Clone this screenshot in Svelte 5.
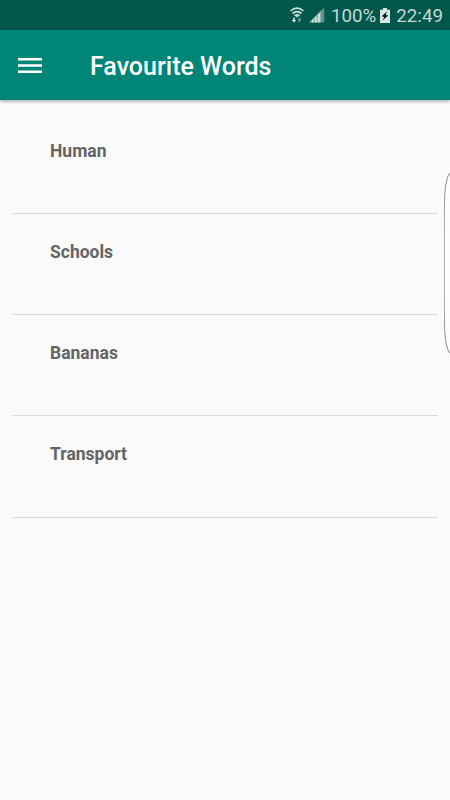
<script>
  const words = ['Human', 'Schools', 'Bananas', 'Transport'];
</script>

<div class="screen">
  <div class="status">
    <svg class="wifi" width="14" height="16" viewBox="0 0 14 16" fill="none" stroke="#cfe1de" stroke-width="1.7">
      <path d="M.7 3.9Q7-1.5 13.3 3.9M2.6 6.5Q7 2.6 11.4 6.5M4.6 8.9Q7 6.9 9.4 8.9" />
      <path d="M5.5 8.8h3L7 10.7z" fill="#cfe1de" stroke="none" />
      <path d="M3.2 10.8h1.7v2.2h1.5L4 15.5 1.7 13h1.5z" fill="#d5e6e3" stroke="none" />
      <path d="M8.6 15.3v-2.2H7.2l2.3-2.5 2.3 2.5h-1.5v2.2z" fill="#669b92" stroke="none" />
    </svg>
    <svg class="signal" width="16" height="16" viewBox="0 0 16 16">
      <path d="M0 15.5L12 3.5v12z" fill="#8fb5af" />
      <path d="M12 3.5L15.3 .5v15H12z" fill="#5f938b" />
      <path d="M3 12.7h1.6v2.8H3zM6 9.7h1.6v5.8H6zM9 6.7h1.8v8.8H9z" fill="#d2e3e0" />
    </svg>
    <span class="percent">100%</span>
    <svg class="battery" width="10" height="15" viewBox="0 0 10 15">
      <path d="M3 0h4v1.7h3V15H0V1.7h3z" fill="#d8e6e4" />
      <path d="M7 3.5L1.7 8.3l2.5.7-1.6 3.6L8.3 7.6 5.8 7z" fill="#05211d" />
    </svg>
    <span class="clock">22:49</span>
  </div>
  <header>
    <svg width="24" height="18" viewBox="0 0 24 18" fill="#fff">
      <path d="M0 1h24v2.4H0zM0 7.3h24v2.4H0zM0 13.6h24V16H0z" />
    </svg>
    <h1>Favourite Words</h1>
  </header>
  <ul>
    {#each words as word}
      <li>{word}</li>
    {/each}
  </ul>
  <svg class="edge" width="6" height="184" viewBox="0 0 6 184">
    <defs>
      <linearGradient id="rim" gradientUnits="userSpaceOnUse" x1="0" y1="0" x2="0" y2="184">
        <stop offset="0" stop-color="#777" />
        <stop offset=".25" stop-color="#aaa" />
        <stop offset=".5" stop-color="#b0b0b0" />
        <stop offset=".75" stop-color="#aaa" />
        <stop offset="1" stop-color="#777" />
      </linearGradient>
    </defs>
    <path d="M6.5 1.5C3 4 .5 15 .5 35V149C.5 169 3 180 6.5 182.5" fill="#fdfdfd" stroke="url(#rim)" stroke-width="1" />
  </svg>
</div>

<style>
  :global(body) { margin: 0; }
  .screen {
    position: relative;
    width: 450px;
    height: 800px;
    overflow: hidden;
    background: #fafafa;
    font-family: Roboto, sans-serif;
  }
  .status {
    display: flex;
    box-sizing: border-box;
    height: 30px;
    padding: 0 7px 0 0;
    justify-content: flex-end;
    background: #00574b;
    color: #c3d8d5;
    font-size: 18.75px;
    line-height: 32px;
  }
  .wifi { margin: 7px 5px 0 0; }
  .signal { margin: 7px 6px 0 0; }
  .battery { margin: 8px 6px 0 4px; }
  .percent, .clock { white-space: nowrap; }
  header {
    display: flex;
    align-items: center;
    box-sizing: border-box;
    height: 70px;
    padding: 1px 0 0 18px;
    background: #008577;
    box-shadow: 0 1px 4px rgba(0, 0, 0, .4);
  }
  h1 {
    margin: 3px 0 0 48px;
    color: #fff;
    font-size: 25px;
    font-weight: 500;
    line-height: 30px;
    white-space: nowrap;
  }
  ul {
    margin: 0;
    padding: 12.5px 12.5px 0;
    list-style: none;
  }
  li {
    box-sizing: border-box;
    height: 101.25px;
    padding: 28px 0 0 37.5px;
    border-bottom: 1px solid #d9d9d9;
    color: #646464;
    font-size: 17.5px;
    font-weight: 700;
    line-height: 21px;
  }
  .edge {
    position: absolute;
    top: 171px;
    left: 444px;
  }
</style>
